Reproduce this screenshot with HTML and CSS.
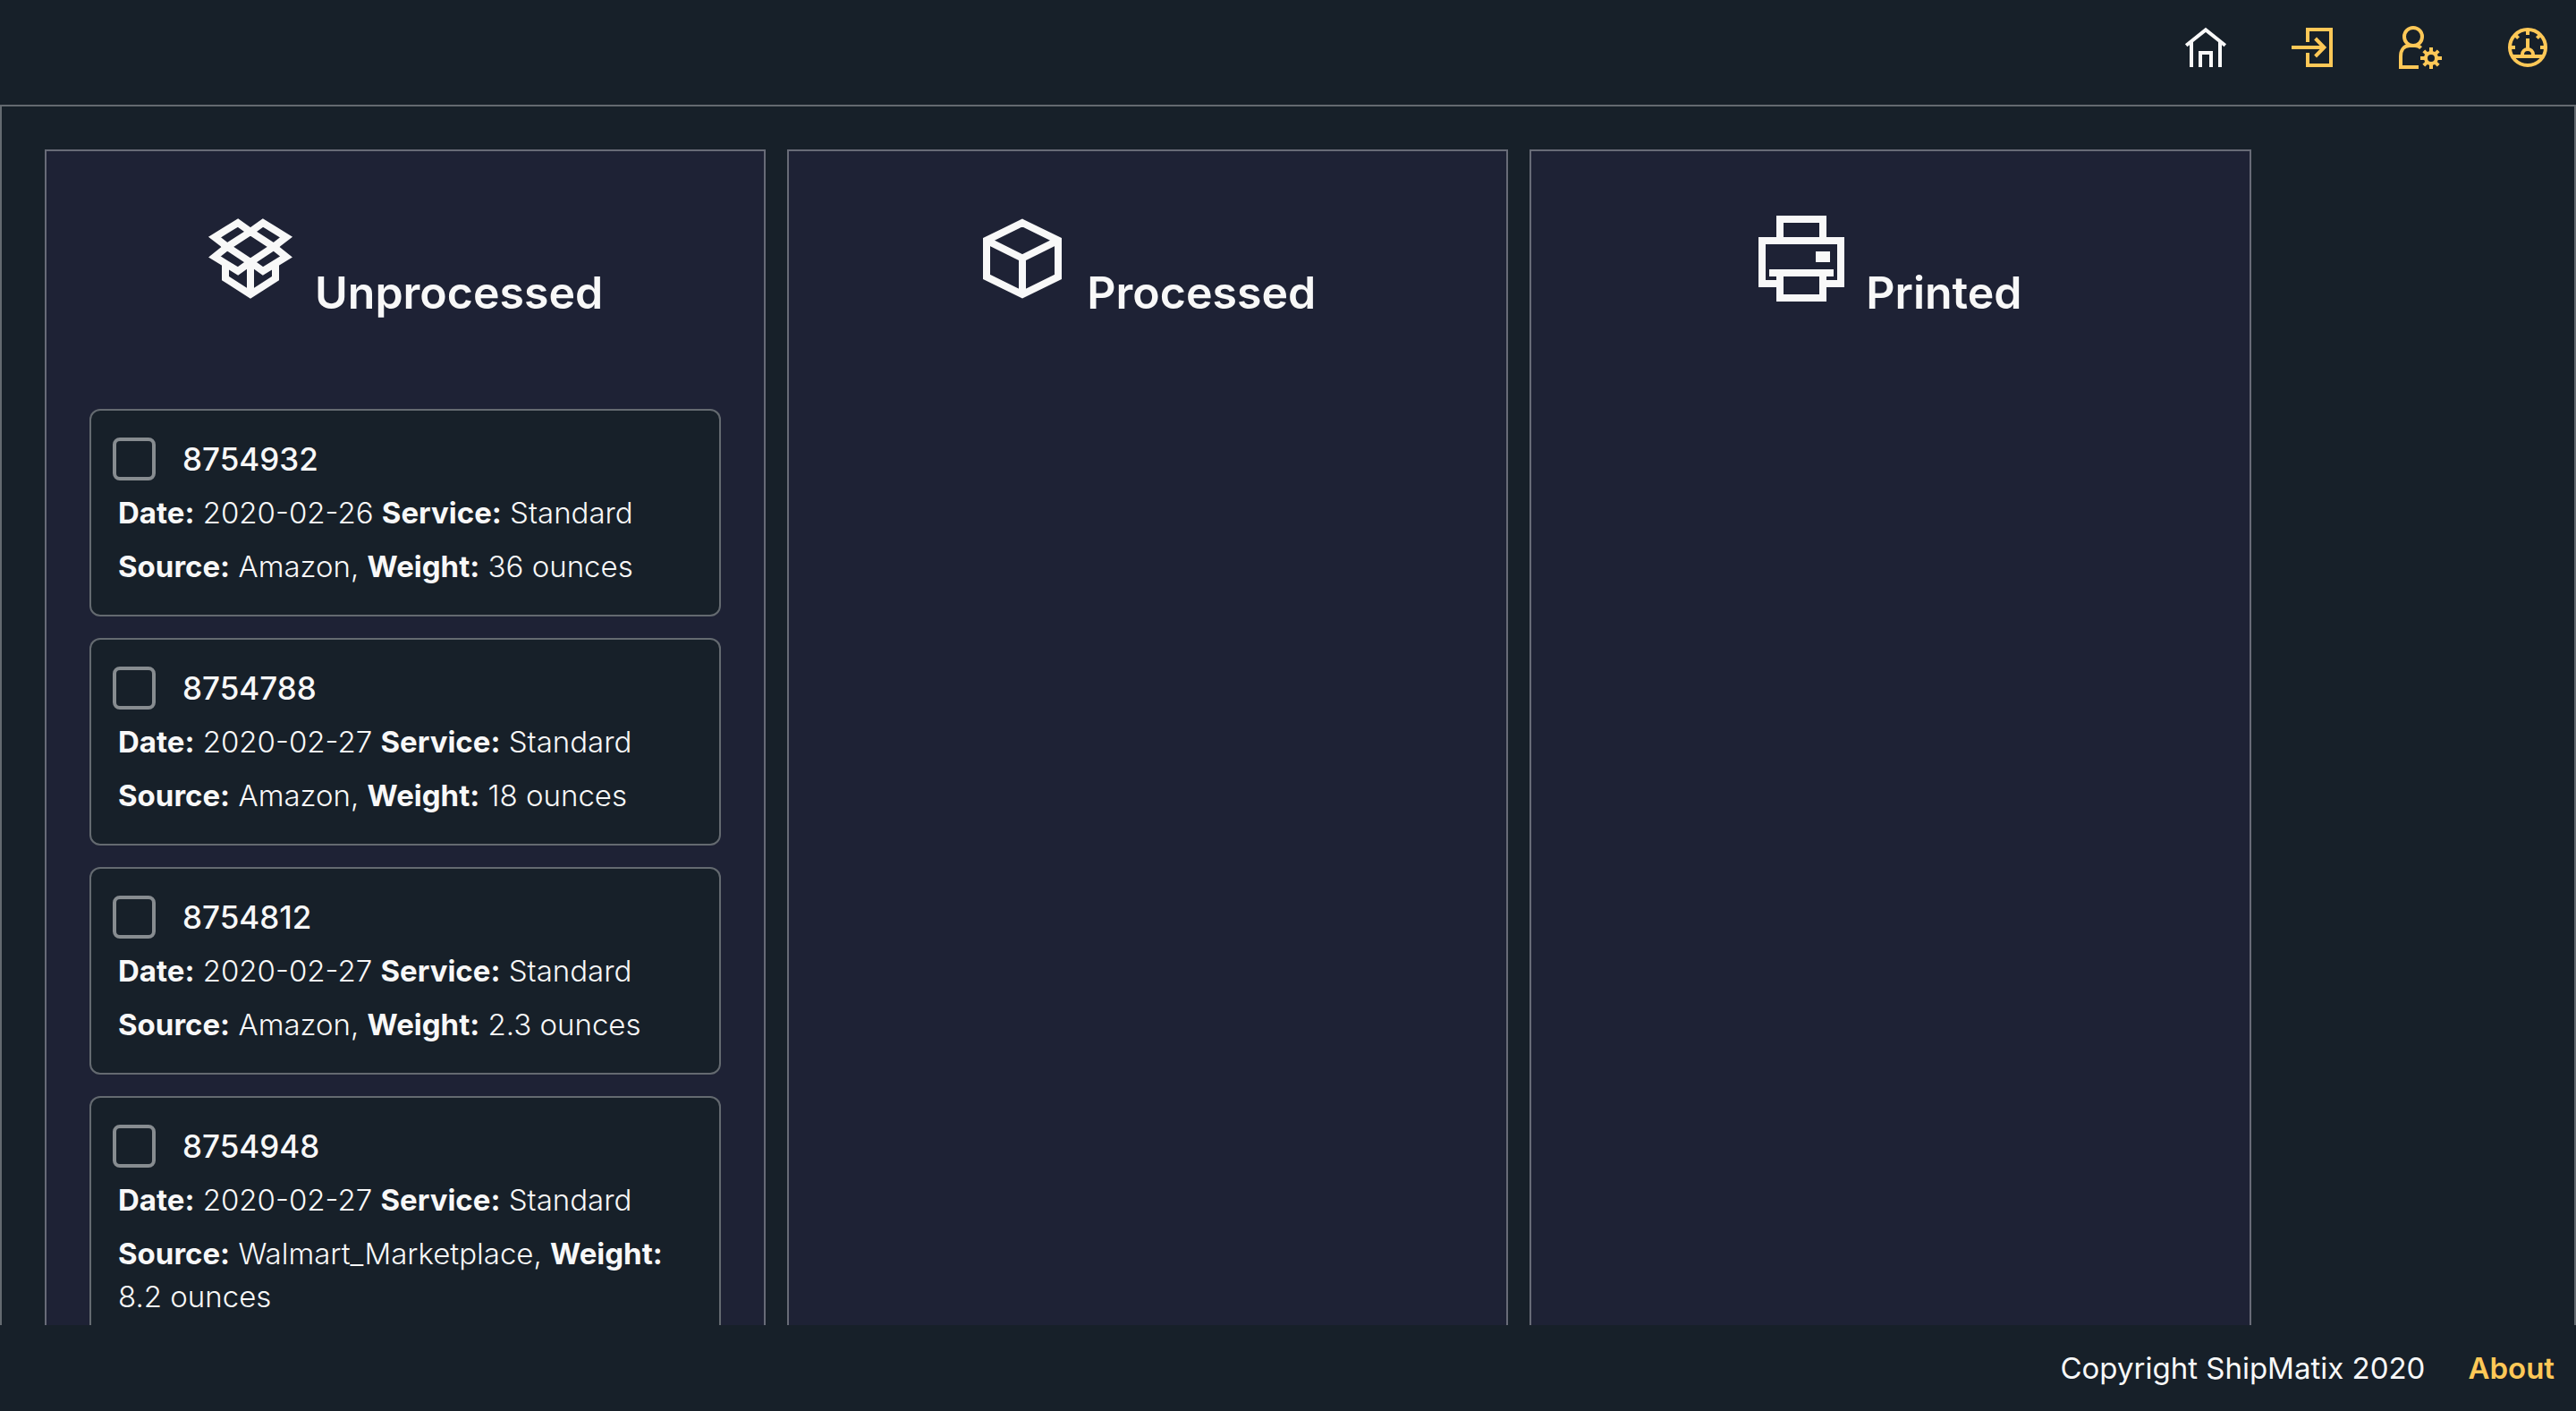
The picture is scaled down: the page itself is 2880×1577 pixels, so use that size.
FILE: index.html
```html
<!DOCTYPE html>
<html lang="en">
<head>
  <meta charset="utf-8">
  <meta name="viewport" content="width=device-width, initial-scale=1">
  <title>ShipMatix</title>
  <link rel="stylesheet" href="styles.css">
</head>
<body>
  <header class="topbar">
    <nav class="nav" aria-label="Main">
      <a class="nav-link nav-link-current" href="#home" aria-label="Home">
        <svg class="icon" viewBox="0 0 24 24"><path d="M1.1 10.9 12 2.2l10.9 8.7M4 9v14M20 9v14M9 23v-8h6v8"/></svg>
      </a>
      <a class="nav-link" href="#login" aria-label="Log in">
        <svg class="icon" viewBox="0 0 24 24"><path d="M9 9V2h13v20H9v-7M0 12h18M13.3 7l4.9 5-4.9 5"/></svg>
      </a>
      <a class="nav-link" href="#account" aria-label="Account settings">
        <svg class="icon" viewBox="0 0 24 24"><circle cx="8" cy="6" r="5"/><path d="M11 23H1v-6c0-3.500 1.800-6 5-6h3c1.400 0 2.500.5 3.300 1.300"/><circle cx="18" cy="18" r="3"/><path d="M18 12v2.500M18 21.500V24M12 18h2.500M21.500 18H24M13.900 13.900l1.700 1.700M20.400 20.400l1.700 1.700M13.900 22.100l1.700-1.700M20.400 15.600l1.700-1.700"/></svg>
      </a>
      <a class="nav-link" href="#dashboard" aria-label="Dashboard">
        <svg class="icon" viewBox="0 0 24 24"><circle cx="12" cy="12" r="10"/><path d="M12 2v3M2 12h3M19 12h3M4.900 4.900l1.900 1.900M19.100 4.900l-1.900 1.900M12 7v6M9 17v-1a3 3 0 0 1 6 0v1M3 17h18"/></svg>
      </a>
    </nav>
  </header>

  <main class="board">
    <section class="column">
      <h2 class="column-title">
        <svg class="icon icon-large" viewBox="0 0 24 24"><path d="M12 4.500 8.500 2 2 6l3.500 2.700L2 11.500l6.500 4L12 13l3.500 2.500 6.500-4-3.500-2.800L22 6l-6.500-4zM12 4.500 5.500 8.700 12 13l6.500-4.300zM5 13.500v4l7 4.500 7-4.500v-4M12 13v9"/></svg>
        <span>Unprocessed</span>
      </h2>
      <ul class="orders">
        <li class="order">
          <label class="order-id"><input class="order-check" type="checkbox"> 8754932</label>
          <p class="order-line"><b>Date:</b> 2020-02-26 <b>Service:</b> Standard</p>
          <p class="order-line"><b>Source:</b> Amazon, <b>Weight:</b> 36 ounces</p>
        </li>
        <li class="order">
          <label class="order-id"><input class="order-check" type="checkbox"> 8754788</label>
          <p class="order-line"><b>Date:</b> 2020-02-27 <b>Service:</b> Standard</p>
          <p class="order-line"><b>Source:</b> Amazon, <b>Weight:</b> 18 ounces</p>
        </li>
        <li class="order">
          <label class="order-id"><input class="order-check" type="checkbox"> 8754812</label>
          <p class="order-line"><b>Date:</b> 2020-02-27 <b>Service:</b> Standard</p>
          <p class="order-line"><b>Source:</b> Amazon, <b>Weight:</b> 2.3 ounces</p>
        </li>
        <li class="order">
          <label class="order-id"><input class="order-check" type="checkbox"> 8754948</label>
          <p class="order-line"><b>Date:</b> 2020-02-27 <b>Service:</b> Standard</p>
          <p class="order-line"><b>Source:</b> Walmart_Marketplace, <b>Weight:</b> 8.2 ounces</p>
        </li>
      </ul>
    </section>

    <section class="column">
      <h2 class="column-title">
        <svg class="icon icon-large" viewBox="0 0 24 24"><path d="M12 2 22 6.900v10.200L12 22 2 17.100V6.900zM2 6.900l10 5 10-5M12 11.900V22"/></svg>
        <span>Processed</span>
      </h2>
    </section>

    <section class="column">
      <h2 class="column-title">
        <svg class="icon icon-large" viewBox="0 0 24 24"><path d="M6 7V1h12v6M6 19H1V7h22v12h-5M3 16h18M6 16v7h12v-7"/><path class="icon-solid" d="M16 10h4v3h-4z"/></svg>
        <span>Printed</span>
      </h2>
    </section>
  </main>

  <footer class="footer">
    <span>Copyright ShipMatix 2020</span>
    <a class="footer-link" href="#about">About</a>
  </footer>
</body>
</html>
```

FILE: styles.css
```css
:root {
  --page: #172029;
  --panel: #1e2235;
  --text: #f8f8f8;
  --accent: #ffc857;
  --line: rgba(248, 248, 248, 0.34);
}

* {
  box-sizing: border-box;
}

body {
  display: flex;
  flex-direction: column;
  height: 100vh;
  margin: 0;
  overflow: hidden;
  background: var(--page);
  color: var(--text);
  font: 300 33px/48px Inter, "Liberation Sans", sans-serif;
}

.topbar {
  flex: none;
  padding: 29px 30px 40px;
}

.nav {
  display: flex;
  justify-content: flex-end;
  gap: 72px;
}

.nav-link {
  display: flex;
  color: var(--accent);
}

.nav-link-current {
  color: var(--text);
}

.icon {
  flex: none;
  width: 48px;
  height: 48px;
  fill: none;
  stroke: currentColor;
  stroke-width: 2;
}

.icon-large {
  width: 96px;
  height: 96px;
  margin-bottom: 12px;
}

.icon-solid {
  fill: currentColor;
  stroke: none;
}

.board {
  display: flex;
  flex: 1;
  gap: 24px;
  min-height: 0;
  padding: 48px;
  overflow: hidden;
  border: 2px solid var(--line);
  border-bottom: 0;
}

.column {
  flex: none;
  width: 29%;
  height: max-content;
  min-height: 100vh;
  padding: 48px;
  border: 2px solid var(--line);
  background: var(--panel);
}

.column-title {
  display: flex;
  align-items: flex-end;
  justify-content: center;
  gap: 24px;
  height: 144px;
  margin: 0 0 96px;
  padding-bottom: 12px;
  font-size: 50px;
  font-weight: 600;
  line-height: 44px;
}

.orders {
  display: grid;
  gap: 24px;
  margin: 0;
  padding: 0;
  list-style: none;
}

.order {
  display: grid;
  gap: 12px;
  padding: 30px 24px;
  border: 2px solid var(--line);
  border-radius: 12px;
  background: var(--page);
}

.order-id {
  display: flex;
  align-items: center;
  gap: 30px;
  font-size: 35px;
  font-weight: 500;
}

.order-check {
  width: 48px;
  height: 48px;
  margin: 0;
  appearance: none;
  border: 4px solid rgba(248, 248, 248, 0.5);
  border-radius: 8px;
}

.order-check:checked {
  background: var(--accent);
}

.order-line {
  margin: 0;
  padding-left: 6px;
}

.order-line b {
  font-weight: 700;
}

.footer {
  display: flex;
  flex: none;
  justify-content: flex-end;
  gap: 48px;
  padding: 24px;
  font-weight: 400;
}

.footer-link {
  color: var(--accent);
  font-weight: 600;
  text-decoration: none;
}
```
